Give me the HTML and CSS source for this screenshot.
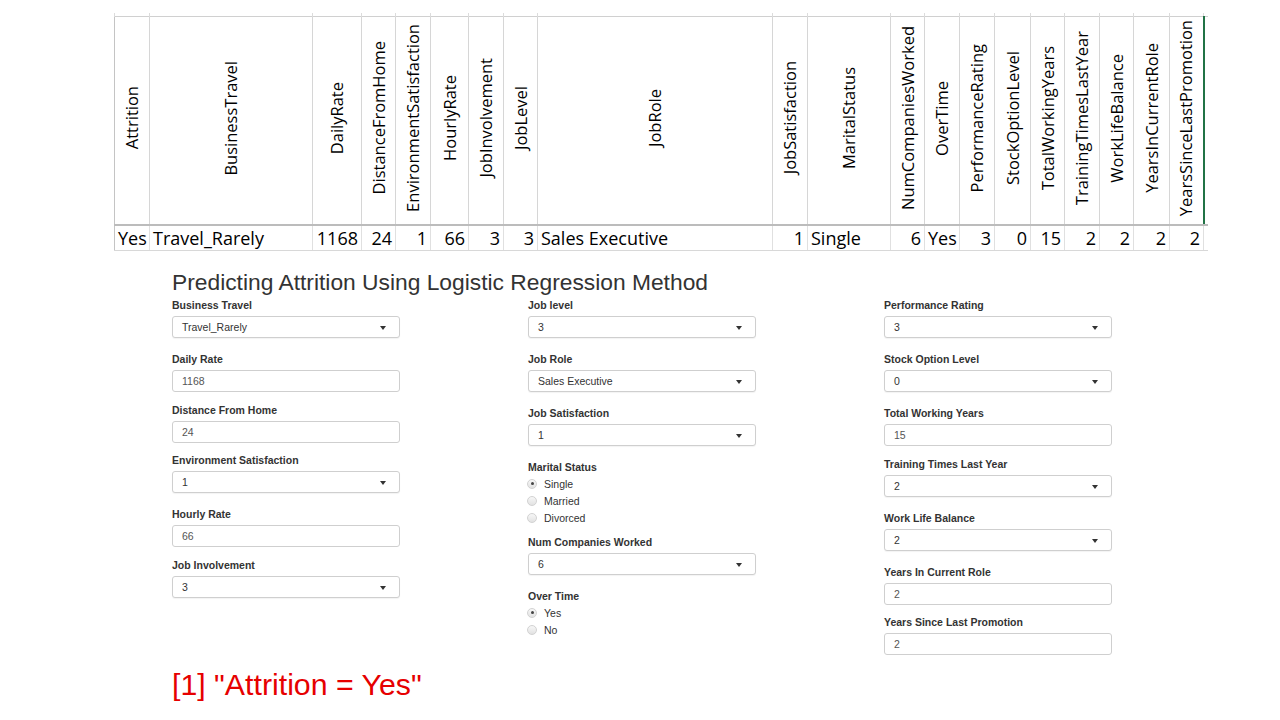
FILE: index.html
```html
<!DOCTYPE html>
<html lang="en">
<head>
<meta charset="utf-8">
<title>Predicting Attrition</title>
<link rel="stylesheet" href="styles.css">
</head>
<body>
<div class="sheet-wrap">
<table class="sheet">
<colgroup>
<col style="width:35px"><col style="width:163px"><col style="width:49px"><col style="width:34px"><col style="width:35px"><col style="width:38px"><col style="width:35px"><col style="width:34px"><col style="width:235px"><col style="width:35px"><col style="width:83px"><col style="width:34px"><col style="width:35px"><col style="width:35px"><col style="width:36px"><col style="width:34px"><col style="width:35px"><col style="width:34px"><col style="width:36px"><col style="width:34px"><col style="width:4px">
</colgroup>
<tr class="ticks"><td></td><td></td><td></td><td></td><td></td><td></td><td></td><td></td><td></td><td></td><td></td><td></td><td></td><td></td><td></td><td></td><td></td><td></td><td></td><td></td><td class="end"></td></tr>
<tr class="head">
<th><span class="vt">Attrition</span></th>
<th><span class="vt">BusinessTravel</span></th>
<th><span class="vt">DailyRate</span></th>
<th><span class="vt">DistanceFromHome</span></th>
<th><span class="vt">EnvironmentSatisfaction</span></th>
<th><span class="vt">HourlyRate</span></th>
<th><span class="vt">JobInvolvement</span></th>
<th><span class="vt">JobLevel</span></th>
<th><span class="vt">JobRole</span></th>
<th><span class="vt">JobSatisfaction</span></th>
<th><span class="vt">MaritalStatus</span></th>
<th><span class="vt">NumCompaniesWorked</span></th>
<th><span class="vt">OverTime</span></th>
<th><span class="vt">PerformanceRating</span></th>
<th><span class="vt">StockOptionLevel</span></th>
<th><span class="vt">TotalWorkingYears</span></th>
<th><span class="vt">TrainingTimesLastYear</span></th>
<th><span class="vt">WorkLifeBalance</span></th>
<th><span class="vt">YearsInCurrentRole</span></th>
<th class="active"><span class="vt">YearsSinceLastPromotion</span></th>
<th class="end"></th>
</tr>
<tr class="data">
<td>Yes</td>
<td>Travel_Rarely</td>
<td class="n">1168</td>
<td class="n">24</td>
<td class="n">1</td>
<td class="n">66</td>
<td class="n">3</td>
<td class="n">3</td>
<td>Sales Executive</td>
<td class="n">1</td>
<td>Single</td>
<td class="n">6</td>
<td>Yes</td>
<td class="n">3</td>
<td class="n">0</td>
<td class="n">15</td>
<td class="n">2</td>
<td class="n">2</td>
<td class="n">2</td>
<td class="n">2</td>
<td class="end"></td>
</tr>
</table>
</div>

<div class="app">
<h2 class="title">Predicting Attrition Using Logistic Regression Method</h2>
<div class="cols">
<div class="col">
<div class="field sel"><label>Business Travel</label><div class="box select">Travel_Rarely<i class="caret"></i></div></div>
<div class="field txt"><label>Daily Rate</label><div class="box text">1168</div></div>
<div class="field txt"><label>Distance From Home</label><div class="box text">24</div></div>
<div class="field sel"><label>Environment Satisfaction</label><div class="box select">1<i class="caret"></i></div></div>
<div class="field txt"><label>Hourly Rate</label><div class="box text">66</div></div>
<div class="field sel"><label>Job Involvement</label><div class="box select">3<i class="caret"></i></div></div>
</div>
<div class="col">
<div class="field sel"><label>Job level</label><div class="box select">3<i class="caret"></i></div></div>
<div class="field sel"><label>Job Role</label><div class="box select">Sales Executive<i class="caret"></i></div></div>
<div class="field sel"><label>Job Satisfaction</label><div class="box select">1<i class="caret"></i></div></div>
<div class="field radios"><label>Marital Status</label>
<div class="radio"><span class="dot on"></span>Single</div>
<div class="radio"><span class="dot"></span>Married</div>
<div class="radio"><span class="dot"></span>Divorced</div>
</div>
<div class="field sel"><label>Num Companies Worked</label><div class="box select">6<i class="caret"></i></div></div>
<div class="field radios"><label>Over Time</label>
<div class="radio"><span class="dot on"></span>Yes</div>
<div class="radio"><span class="dot"></span>No</div>
</div>
</div>
<div class="col">
<div class="field sel"><label>Performance Rating</label><div class="box select">3<i class="caret"></i></div></div>
<div class="field sel"><label>Stock Option Level</label><div class="box select">0<i class="caret"></i></div></div>
<div class="field txt"><label>Total Working Years</label><div class="box text">15</div></div>
<div class="field sel"><label>Training Times Last Year</label><div class="box select">2<i class="caret"></i></div></div>
<div class="field sel"><label>Work Life Balance</label><div class="box select">2<i class="caret"></i></div></div>
<div class="field txt"><label>Years In Current Role</label><div class="box text">2</div></div>
<div class="field txt"><label>Years Since Last Promotion</label><div class="box text">2</div></div>
</div>
</div>
<div class="result">[1] "Attrition = Yes"</div>
</div>
</body>
</html>
```

FILE: styles.css
```css
html, body {
  margin: 0;
  padding: 0;
  background: #ffffff;
}

.sheet-wrap {
  padding: 13px 0 0 114px;
}

.sheet {
  border-collapse: collapse;
  table-layout: fixed;
  width: 1093px;
  font-family: "Open Sans", "DejaVu Sans", sans-serif;
  font-size: 16.5px;
  color: #000;
}

.sheet td, .sheet th {
  padding: 0;
  overflow: hidden;
  white-space: nowrap;
}

.ticks td {
  height: 3px;
  border-left: 1px solid #dcdcdc;
  border-right: 1px solid #dcdcdc;
}

.head th {
  height: 207px;
  font-weight: normal;
  text-align: center;
  vertical-align: middle;
  border-top: 1px solid #d0d0d0;
  border-left: 1px solid #d6d6d6;
  border-right: 1px solid #d6d6d6;
  border-bottom: 2px solid #bcbcbc;
}

.head th:first-child {
  border-left: 1px solid #c4c4c4;
}

.head th.active {
  border-right: 2px solid #217346;
}

.vt {
  display: inline-block;
  writing-mode: vertical-rl;
  transform: rotate(180deg);
  line-height: 22px;
}

.data td {
  height: 24px;
  line-height: 24px;
  padding: 0 3px;
  font-size: 18px;
  text-align: left;
  border-left: 1px solid #e0e0e0;
  border-right: 1px solid #e0e0e0;
  border-bottom: 1px solid #d8d8d8;
}

.data td:first-child {
  border-left: 1px solid #c4c4c4;
}

.data td.n {
  text-align: right;
}

.sheet .end {
  border-right: none;
  padding: 0;
}

.ticks td.end {
  border-right: none;
}

/* Shiny app */
.app {
  padding: 18px 0 0 172px;
  font-family: "Liberation Sans", Arial, sans-serif;
  color: #333;
}

.title {
  margin: 0 0 4px;
  font-size: 22.8px;
  line-height: 26px;
  font-weight: normal;
  color: #333;
}

.cols {
  display: grid;
  grid-template-columns: 228px 228px 228px;
  column-gap: 128px;
  align-items: start;
}

.field label {
  display: block;
  font-size: 10.5px;
  line-height: 12px;
  font-weight: bold;
  color: #333;
  margin-bottom: 5px;
}

.field.sel {
  margin-bottom: 15px;
}

.field.txt {
  margin-bottom: 11.5px;
}

.field.radios {
  margin-bottom: 10px;
}

.field.radios label {
  margin-bottom: 2px;
}

.box {
  position: relative;
  box-sizing: border-box;
  height: 22px;
  border: 1px solid #cfcfcf;
  border-radius: 3px;
  padding: 0 9px;
  font-size: 10.5px;
  line-height: 20px;
  background: #fff;
}

.box.text {
  color: #555;
}

.box.select {
  color: #333;
  box-shadow: 0 1px 1px rgba(0, 0, 0, 0.05);
}

.caret {
  position: absolute;
  right: 13px;
  top: 9px;
  width: 0;
  height: 0;
  border-left: 3.5px solid transparent;
  border-right: 3.5px solid transparent;
  border-top: 4px solid #333;
}

.radio {
  display: flex;
  align-items: center;
  height: 17px;
  font-size: 10.5px;
  color: #333;
}

.dot {
  position: relative;
  box-sizing: border-box;
  width: 10px;
  height: 10px;
  margin-left: -1px;
  margin-right: 7px;
  border-radius: 50%;
  border: 1px solid #d2d2d2;
  background: linear-gradient(#f7f7f7, #e2e2e2);
}

.dot.on::after {
  content: "";
  position: absolute;
  left: 2.5px;
  top: 2.5px;
  width: 3px;
  height: 3px;
  border-radius: 50%;
  background: #444;
}

.result {
  margin-top: 1px;
  font-size: 30.3px;
  line-height: 34px;
  color: #e60000;
}
```
